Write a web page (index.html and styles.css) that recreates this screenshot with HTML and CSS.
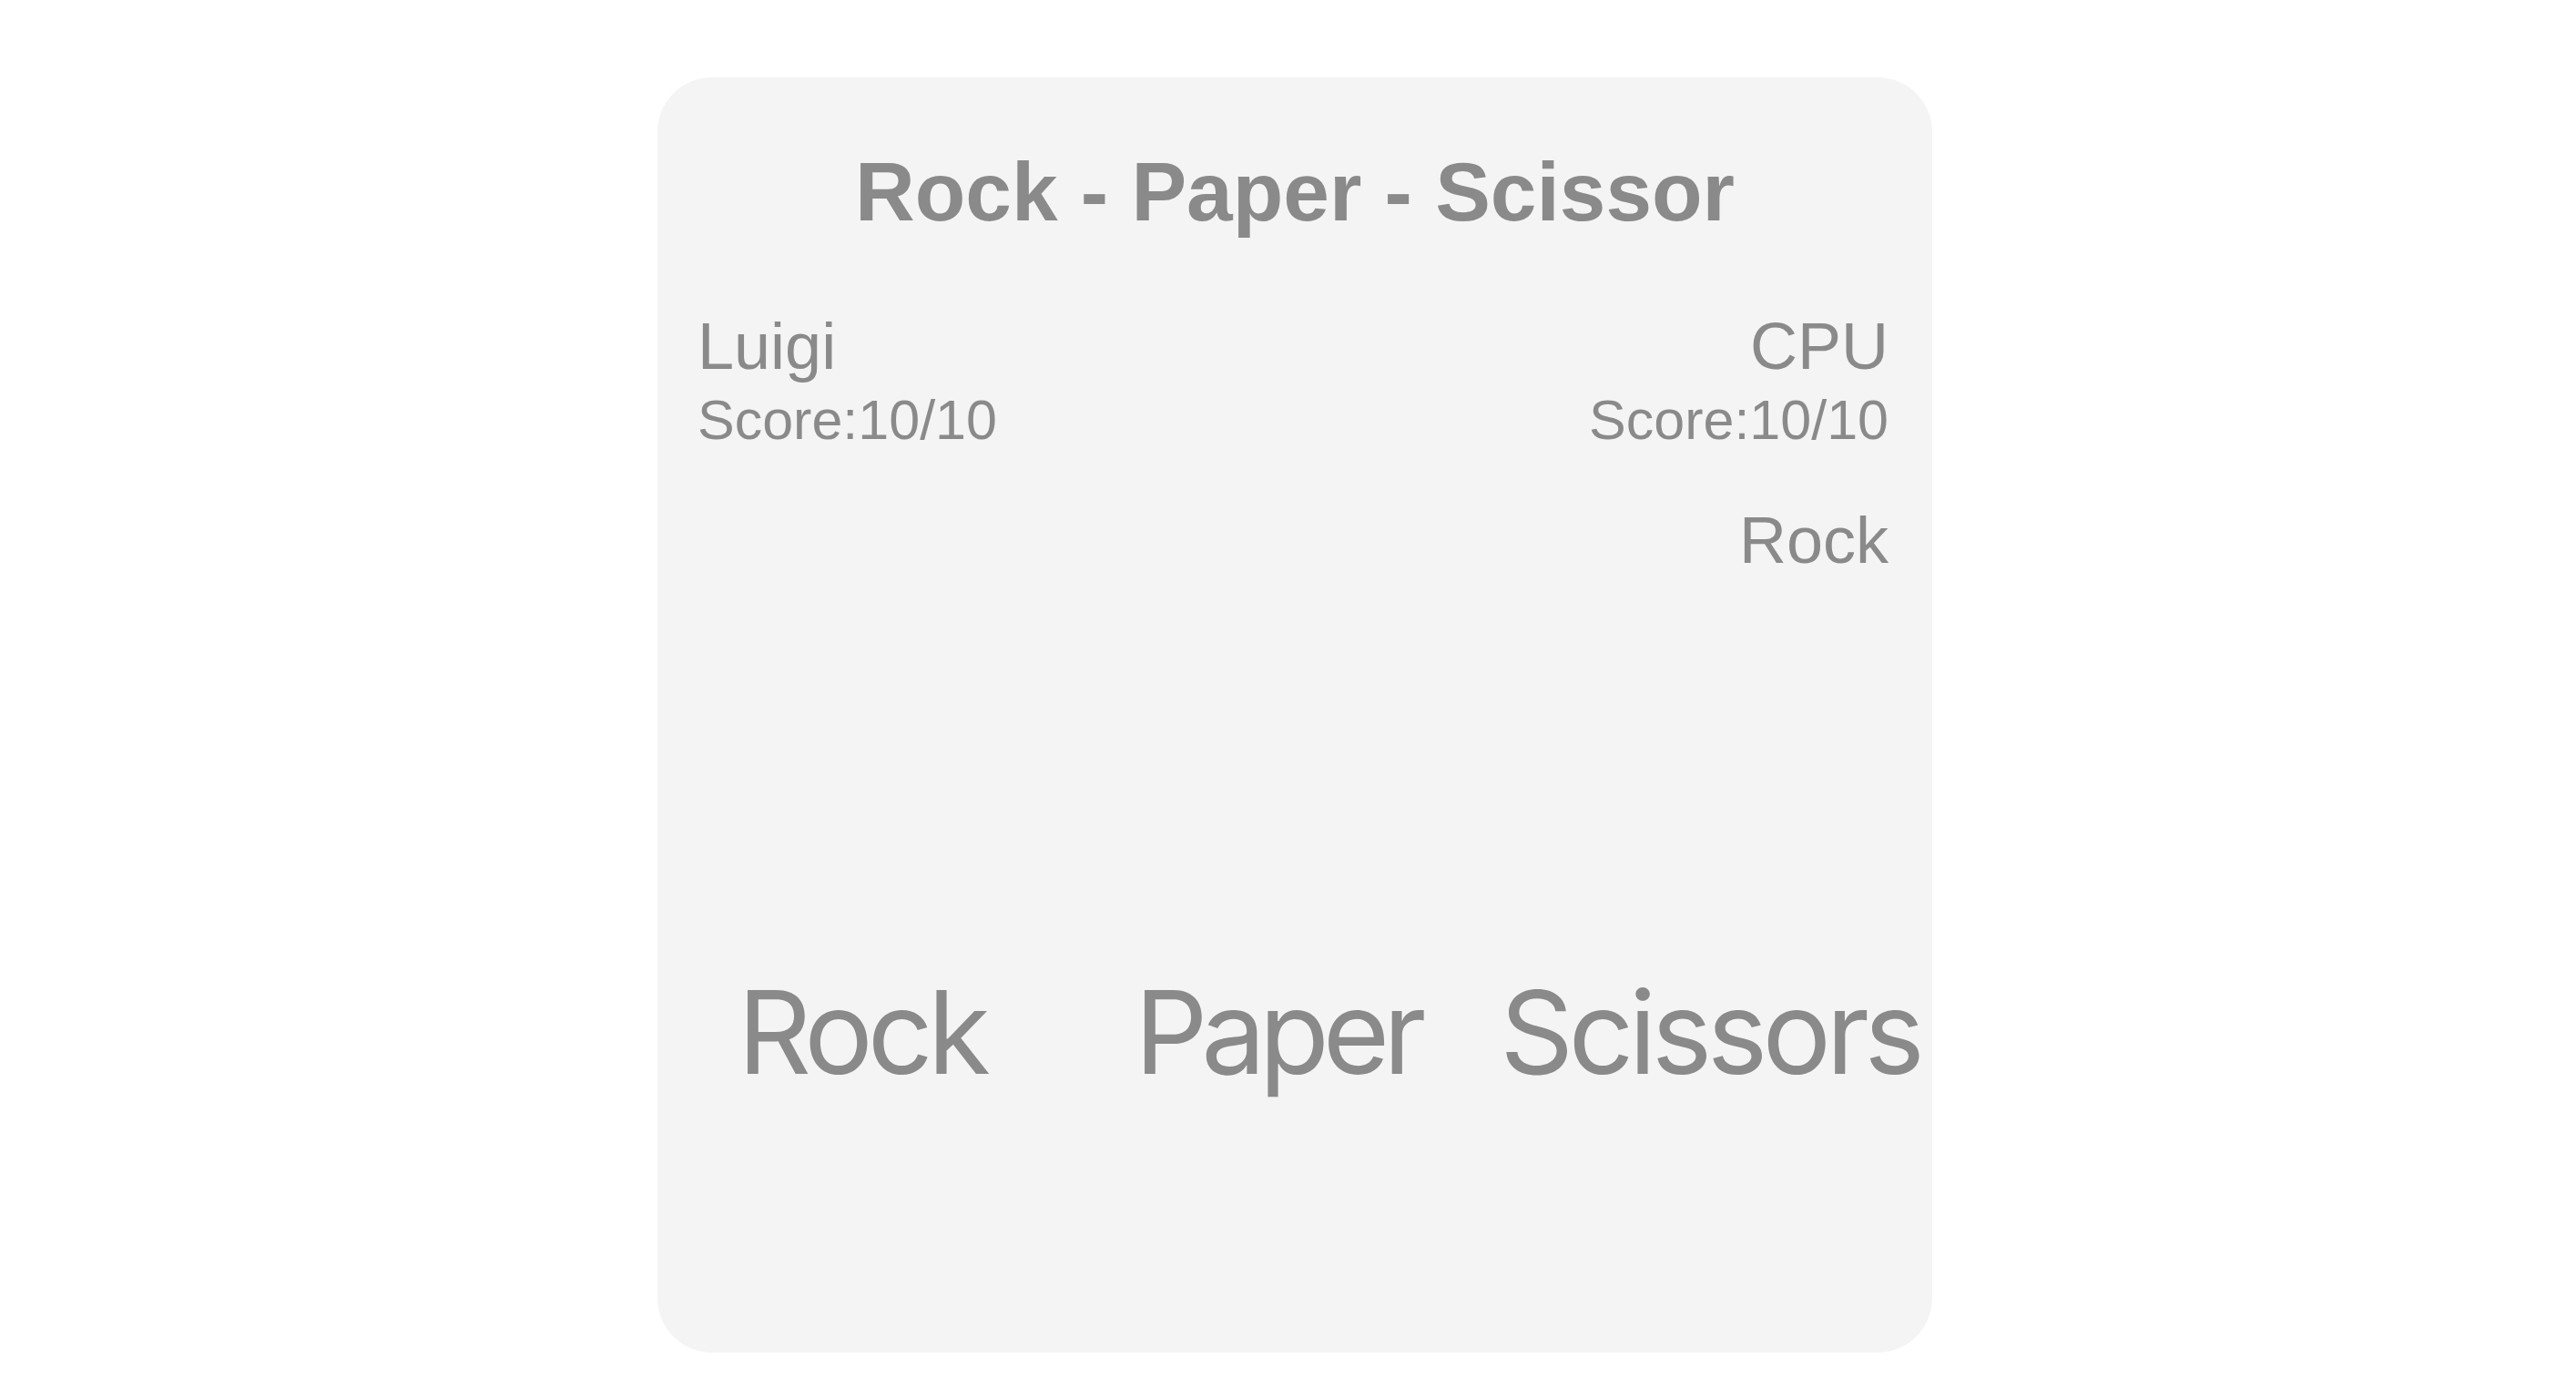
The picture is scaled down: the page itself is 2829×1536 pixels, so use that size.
FILE: index.html
```html
<!DOCTYPE html>
<html lang="en">
<head>
<meta charset="utf-8">
<title>Rock - Paper - Scissor</title>
<link rel="stylesheet" href="styles.css">
</head>
<body>
<main class="card">
  <h1 class="title">Rock - Paper - Scissor</h1>
  <section class="players">
    <div class="player">
      <div class="player-name">Luigi</div>
      <div class="player-score">Score:10/10</div>
    </div>
    <div class="player player-cpu">
      <div class="player-name">CPU</div>
      <div class="player-score">Score:10/10</div>
      <div class="player-choice">Rock</div>
    </div>
  </section>
  <div class="choices">
    <button class="choice choice-rock">Rock</button>
    <button class="choice choice-paper">Paper</button>
    <button class="choice choice-scissors">Scissors</button>
  </div>
</main>
</body>
</html>
```

FILE: styles.css
```css
html, body {
  margin: 0;
  padding: 0;
  background: #ffffff;
}

body {
  font-family: "Liberation Sans", Arial, sans-serif;
  color: #8a8a8a;
}

.card {
  box-sizing: border-box;
  width: 1400px;
  height: 1400px;
  margin: 85px 0 0 722px;
  padding: 73px 48px 0 44px;
  background: #f4f4f4;
  border-radius: 60px;
  display: flex;
  flex-direction: column;
}

.title {
  margin: 0;
  font-size: 91px;
  line-height: 106px;
  font-weight: 700;
  text-align: center;
  padding-left: 4px;
}

.players {
  display: flex;
  justify-content: space-between;
  align-items: flex-start;
  margin-top: 76px;
}

.player-cpu {
  text-align: right;
}

.player-name {
  font-size: 72px;
  line-height: 80px;
}

.player-score {
  font-size: 61px;
  line-height: 83px;
}

.player-choice {
  font-size: 72px;
  line-height: 80px;
  margin-top: 50px;
}

.choices {
  display: flex;
  align-items: flex-start;
  margin-top: 425px;
}

.choice {
  background: none;
  border: none;
  padding: 0;
  margin: 0;
  color: #8a8a8a;
  font-family: Inter, "Noto Sans", sans-serif;
  font-size: 126px;
  line-height: 150px;
  letter-spacing: -6.4px;
  white-space: nowrap;
  cursor: pointer;
}

.choice-rock {
  margin-left: 44px;
  letter-spacing: -6px;
}

.choice-paper {
  margin-left: 164px;
  letter-spacing: -7.2px;
}

.choice-scissors {
  margin-left: 88px;
  letter-spacing: -5.6px;
}
```
